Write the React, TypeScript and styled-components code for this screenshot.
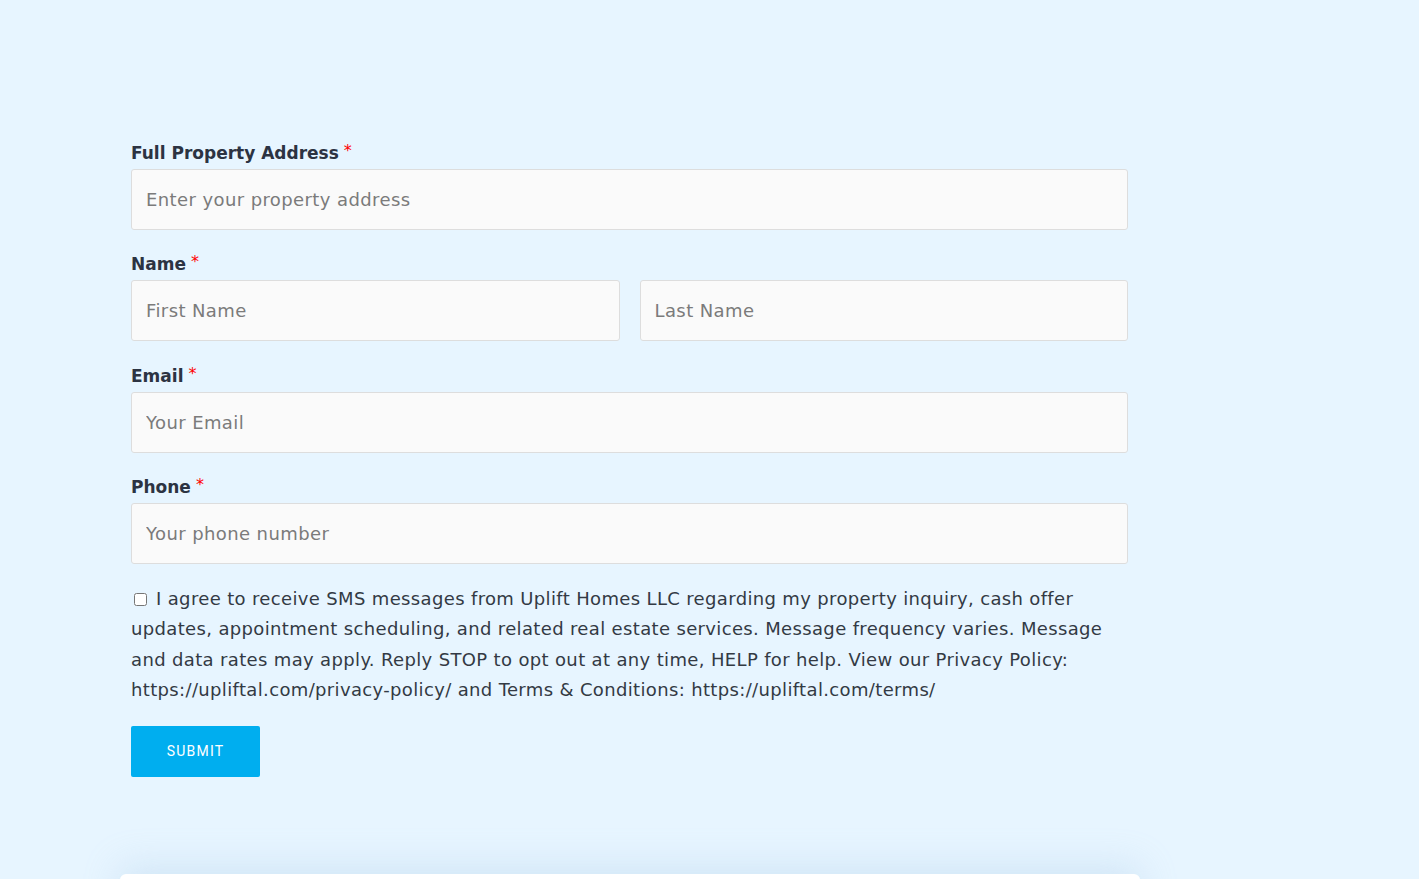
import { FC } from 'react';
import styled, { createGlobalStyle } from 'styled-components';

const GlobalStyle = createGlobalStyle`
  html, body {
    margin: 0;
    padding: 0;
    background: #e7f5ff;
  }
  body {
    font-family: 'DejaVu Sans', 'Open Sans', sans-serif;
    overflow: hidden;
  }
`;

const Page = styled.div`
  width: 100%;
  height: 879px;
  display: flex;
  flex-direction: column;
  align-items: center;
  overflow: hidden;
`;

const Section = styled.section`
  width: 997px;
  padding: 139px 0 97px;
  margin-left: -160px;
`;

const Form = styled.form`
  display: flex;
  flex-direction: column;
`;

const Field = styled.div`
  display: flex;
  flex-direction: column;
  margin-bottom: 20.4px;
`;

const Label = styled.label`
  display: flex;
  align-items: center;
  height: 28px;
  margin-bottom: 2px;
  font-size: 17px;
  font-weight: 700;
  color: #2c3342;
`;

const Required = styled.span`
  color: #ff0000;
  font-size: 16px;
  line-height: 1;
  margin-left: 5px;
  margin-top: -4px;
  font-weight: 400;
`;

const Row = styled.div`
  display: flex;
  gap: 20px;
`;

const Input = styled.input`
  flex: 1;
  min-width: 0;
  height: 61px;
  box-sizing: border-box;
  padding: 0 14px;
  background: #fafafa;
  border: 1px solid #dddddd;
  border-radius: 3px;
  font-family: inherit;
  font-size: 18px;
  letter-spacing: 0.4px;
  color: #333;
  outline: none;

  &::placeholder {
    color: #7b7b7b;
  }
`;

const Consent = styled.label`
  display: block;
  font-size: 18px;
  letter-spacing: 0.35px;
  line-height: 30.5px;
  color: #333a44;
  margin: -1px 0 20px;
`;

const Check = styled.input`
  width: 13px;
  height: 13px;
  margin: 0 9px 0 3px;
  vertical-align: -1px;
`;

const Submit = styled.button`
  align-self: flex-start;
  width: 129px;
  height: 51px;
  border: none;
  border-radius: 2px;
  background: #00aeef;
  color: #ffffff;
  font-family: Roboto, 'Liberation Sans', sans-serif;
  font-size: 14px;
  font-weight: 400;
  letter-spacing: 1.2px;
  cursor: pointer;
`;

const Card = styled.div`
  width: 1020px;
  height: 60px;
  flex-shrink: 0;
  margin-left: -159px;
  background: #ffffff;
  border-radius: 6px 6px 0 0;
  box-shadow: 0 -8px 36px rgba(160, 195, 225, 0.3);
`;

type FieldProps = {
  label: string;
  placeholders: string[];
  type?: string;
};

const FormField: FC<FieldProps> = ({ label, placeholders, type = 'text' }) => (
  <Field>
    <Label>
      {label}
      <Required>*</Required>
    </Label>
    <Row>
      {placeholders.map((p) => (
        <Input key={p} type={type} placeholder={p} />
      ))}
    </Row>
  </Field>
);

const App: FC = () => (
  <Page>
    <GlobalStyle />
    <Section>
      <Form onSubmit={(e) => e.preventDefault()}>
        <FormField label="Full Property Address" placeholders={['Enter your property address']} />
        <FormField label="Name" placeholders={['First Name', 'Last Name']} />
        <FormField label="Email" type="email" placeholders={['Your Email']} />
        <FormField label="Phone" type="tel" placeholders={['Your phone number']} />
        <Consent>
          <Check type="checkbox" />
          I agree to receive SMS messages from Uplift Homes LLC regarding my property inquiry, cash offer
          updates, appointment scheduling, and related real estate services. Message frequency varies. Message
          and data rates may apply. Reply STOP to opt out at any time, HELP for help. View our Privacy Policy:
          https://upliftal.com/privacy-policy/ and Terms &amp; Conditions: https://upliftal.com/terms/
        </Consent>
        <Submit type="submit">SUBMIT</Submit>
      </Form>
    </Section>
    <Card />
  </Page>
);

export default App;
